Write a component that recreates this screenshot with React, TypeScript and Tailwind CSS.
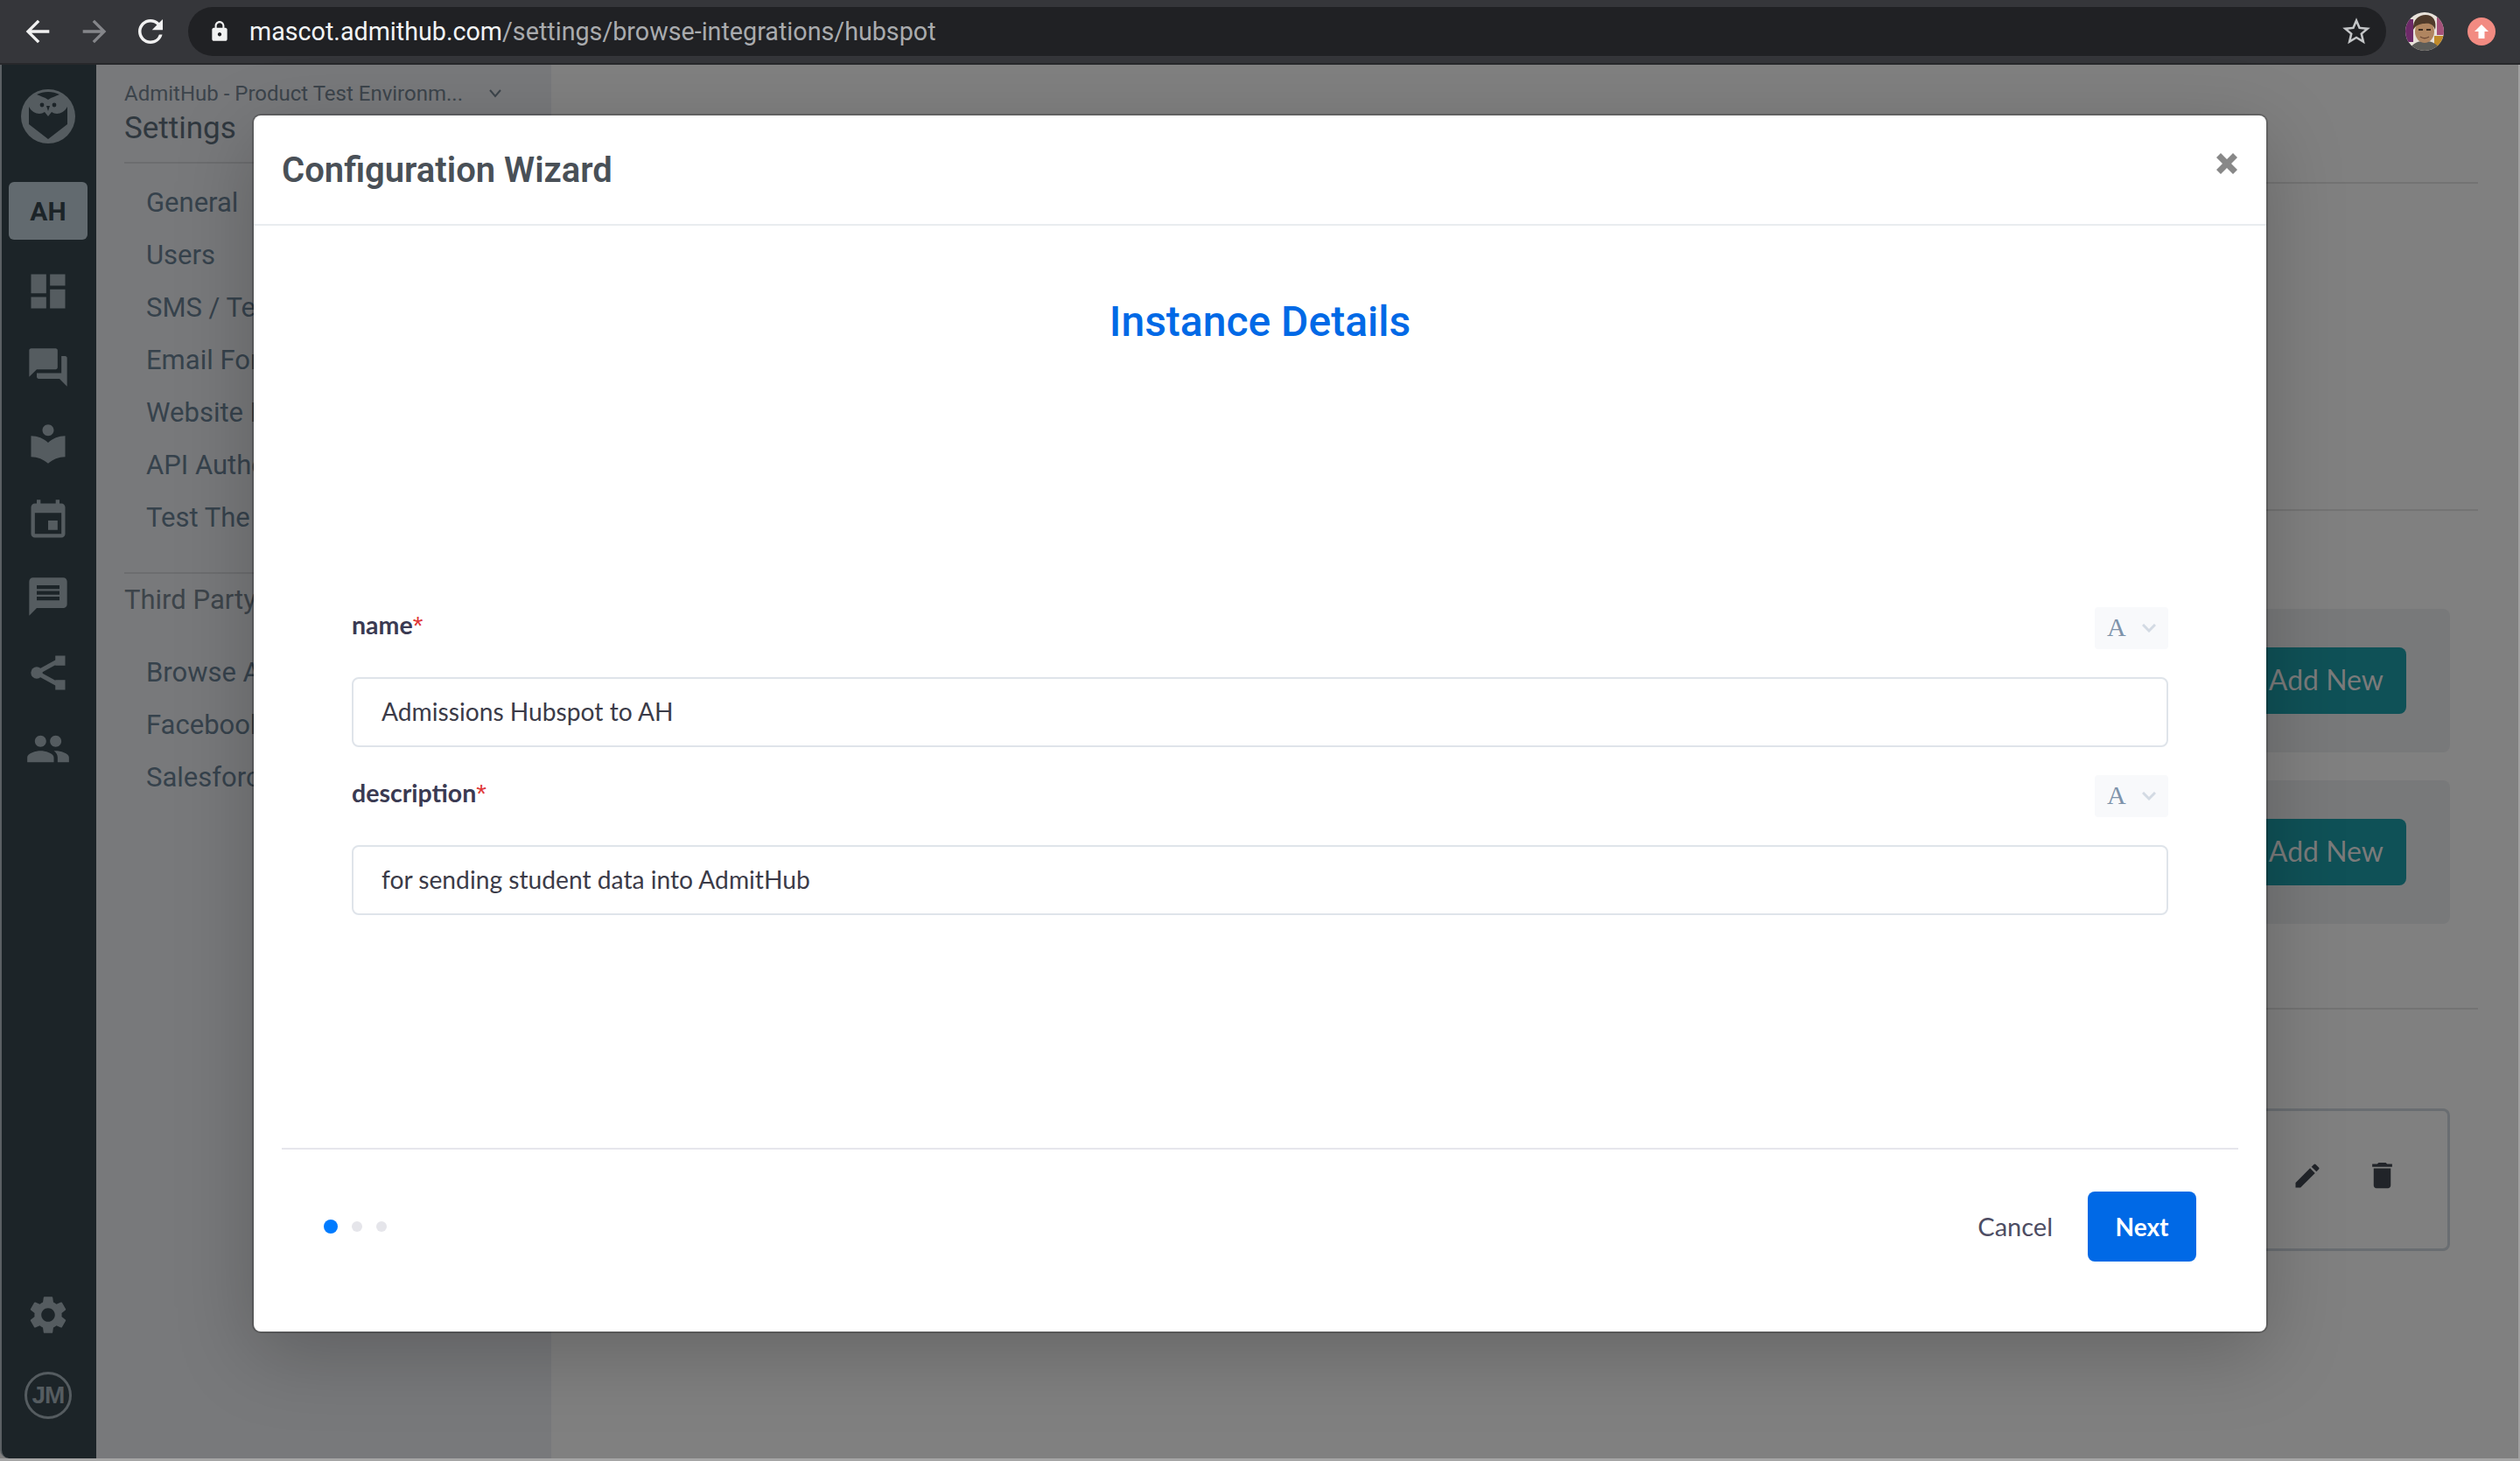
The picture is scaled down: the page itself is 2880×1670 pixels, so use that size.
import { MdArrowBack, MdArrowForward, MdRefresh, MdLock, MdStarBorder, MdDashboard, MdQuestionAnswer, MdLocalLibrary, MdEvent, MdMessage, MdPeople, MdSettings, MdEdit, MdDelete } from "react-icons/md";

const ShareNodes = ({ size }: { size: number }) => (
  <svg width={size} height={size} viewBox="0 0 24 24" fill="currentColor">
    <circle cx="6" cy="12" r="3.1" />
    <rect x="15.8" y="3" width="5.2" height="5.2" />
    <rect x="15.8" y="15.8" width="5.2" height="5.2" />
    <path d="M6 12 L18 5.4 M6 12 L18 18.6" stroke="currentColor" strokeWidth="2.3" fill="none" />
  </svg>
);

const railIcons = [
  { name: "dashboard", Icon: MdDashboard },
  { name: "chat", Icon: MdQuestionAnswer },
  { name: "knowledge", Icon: MdLocalLibrary },
  { name: "calendar", Icon: MdEvent },
  { name: "messages", Icon: MdMessage },
  { name: "share", Icon: ShareNodes },
  { name: "people", Icon: MdPeople },
];

const settingsLinks = ["General", "Users", "SMS / Text", "Email Forwarding", "Website Bot", "API Authentication", "Test The Bot"];
const thirdPartyLinks = ["Browse All", "Facebook", "Salesforce"];

const OwlLogo = () => (
  <svg width="62" height="62" viewBox="0 0 62 62">
    <circle cx="31" cy="31" r="31" fill="#555c60" />
    <path d="M18 6 C26 2 36 2 44 6 C40 8 35 9 31 12 C27 9 22 8 18 6 Z" fill="#1c2428" />
    <path d="M9 20 C13 28 22 30 27 26 L31 31 L35 26 C40 30 49 28 53 20 L53 40 L31 57 L9 40 Z" fill="#1c2428" />
    <circle cx="24" cy="18" r="2.4" fill="#1c2428" />
    <circle cx="38" cy="18" r="2.4" fill="#1c2428" />
    <path d="M29 19 L33 19 L31 25 Z" fill="#1c2428" />
  </svg>
);

const Avatar = () => (
  <svg width="44" height="44" viewBox="0 0 44 44">
    <defs>
      <clipPath id="avatar-clip">
        <circle cx="22" cy="22" r="22" />
      </clipPath>
    </defs>
    <g clipPath="url(#avatar-clip)">
      <rect width="44" height="44" fill="#e8e2da" />
      <rect x="0" y="8" width="9" height="26" fill="#6d2a68" />
      <rect x="36" y="6" width="8" height="20" fill="#a4527a" />
      <rect x="33" y="27" width="11" height="13" fill="#c08a2a" />
      <path d="M4 44 C8 34 16 33 22 33 C28 33 36 34 40 44 Z" fill="#5c5c58" />
      <ellipse cx="22" cy="22" rx="11" ry="13" fill="#b08560" />
      <path d="M9 20 C8 8 16 3 23 3 C32 3 36 10 34 20 C32 14 28 12 22 13 C16 13 12 15 9 20 Z" fill="#4f3a2a" />
      <rect x="15" y="19" width="5" height="2" fill="#3c2c20" />
      <rect x="24" y="19" width="5" height="2" fill="#3c2c20" />
      <path d="M17 28 C20 30 24 30 27 28" stroke="#6e4a36" strokeWidth="1.5" fill="none" />
    </g>
  </svg>
);

const BrowserBar = () => (
  <div className="flex h-[74px] shrink-0 items-center border-b-2 border-[#27282b] bg-[#35363a] pl-[23px]">
    <MdArrowBack size={40} className="text-[#f1f1f1]" />
    <MdArrowForward size={40} className="ml-[25px] text-[#85868a]" />
    <MdRefresh size={42} className="ml-[23px] text-[#f1f1f1]" />
    <div className="ml-[22px] flex h-[56px] w-[2512px] items-center rounded-full bg-[#202124] pl-[23px] pr-[15px]">
      <MdLock size={26} className="text-[#f1f1f1]" />
      <div className="ml-[21px] font-['Roboto',sans-serif] text-[28.7px] leading-none text-[#a9abae]">
        <span className="text-[#f1f3f4]">mascot.admithub.com</span>/settings/browse-integrations/hubspot
      </div>
      <MdStarBorder size={38} className="ml-auto text-[#c4c6c8]" />
    </div>
    <div className="ml-[22px]"><Avatar /></div>
    <div className="ml-[27px] flex h-[32px] w-[32px] items-center justify-center rounded-full bg-[#f28b82]">
      <svg width="18" height="18" viewBox="0 0 18 18" fill="#fff"><path d="M9 1 L17 9 L12.5 9 L12.5 17 L5.5 17 L5.5 9 L1 9 Z" /></svg>
    </div>
  </div>
);

const IconRail = () => (
  <div className="flex w-[110px] shrink-0 flex-col items-center rounded-bl-[10px] border-l-2 border-[#5b6064] bg-[#1c2428] pb-[45px] pr-[2px] pt-[28px] text-[#555c60]">
    <OwlLogo />
    <div className="mt-[44px] flex h-[66px] w-[90px] items-center justify-center rounded-[6px] bg-[#626a6f] font-['Roboto',sans-serif] text-[30px] font-bold text-[#1c2428]">
      AH
    </div>
    <div className="mt-[15px] flex flex-col items-center">
      {railIcons.map(({ name, Icon }) => (
        <div key={name} className="flex h-[87.3px] w-[90px] items-center justify-center">
          <Icon size={52} />
        </div>
      ))}
    </div>
    <div className="mt-auto">
      <MdSettings size={52} />
    </div>
    <div className="mt-[39px] flex h-[54px] w-[54px] items-center justify-center rounded-full border-[3px] border-[#555c60] font-['Liberation_Sans',sans-serif] text-[28px] font-bold tracking-[-1px]">
      JM
    </div>
  </div>
);

const SettingsNav = () => (
  <div className="flex w-[520px] shrink-0 flex-col bg-[#78797b] pl-[32px] font-['Roboto',sans-serif] text-[#36424c]">
    <div className="mt-[20px] flex h-[26px] w-[432px] items-center text-[24px] leading-none text-[#3c444b]">
      <span className="whitespace-nowrap">AdmitHub - Product Test Environm...</span>
      <svg width="16" height="10" viewBox="0 0 16 10" className="ml-auto" fill="none" stroke="#3c444b" strokeWidth="2"><path d="M2 1 L8 8 L14 1" /></svg>
    </div>
    <div className="mt-[3px] text-[35px] leading-[48px] text-[#30383f]">Settings</div>
    <div className="mr-[16px] mt-[14px] h-[2px] bg-[#6c6d6f]" />
    <div className="mt-[15px] flex flex-col pl-[25px]">
      {settingsLinks.map((link) => (
        <div key={link} className="flex h-[60px] items-center whitespace-nowrap text-[31px]">{link}</div>
      ))}
    </div>
    <div className="mr-[16px] mt-[32px] h-[2px] bg-[#6c6d6f]" />
    <div className="mt-[10px] flex h-[40px] items-center whitespace-nowrap text-[31px] text-[#3d444a]">Third Party Integrations</div>
    <div className="mt-[33px] flex flex-col pl-[25px]">
      {thirdPartyLinks.map((link) => (
        <div key={link} className="flex h-[60px] items-center whitespace-nowrap text-[31px]">{link}</div>
      ))}
    </div>
  </div>
);

const AddNewPanel = () => (
  <div className="flex h-[164px] items-center justify-end rounded-[8px] bg-[#78797a] pr-[50px]">
    <div className="flex h-[76px] w-[200px] items-center justify-end rounded-[8px] bg-[#0f5157] pb-[2px] pr-[26px] font-['Lato',sans-serif] text-[32px] text-[#7b7b7b]">
      Add New
    </div>
  </div>
);

const MainContent = () => (
  <div className="relative min-w-0 flex-1 bg-[#808080] pl-[90px] pr-[46px]">
    <div className="mt-[50px] flex h-[40px] items-center font-['Roboto',sans-serif] text-[32px] text-[#0f5157]">← Browse Third Party Integrations</div>
    <div className="mt-[44px] h-[2px] bg-[#737373]" />
    <div className="mt-[372px] h-[2px] bg-[#737373]" />
    <div className="mr-[32px] mt-[112px] flex flex-col gap-[32px]">
      <AddNewPanel />
      <AddNewPanel />
    </div>
    <div className="mt-[96px] h-[2px] bg-[#737373]" />
    <div className="mr-[32px] mt-[113px] flex h-[163px] items-start justify-end gap-[48px] rounded-[8px] border-[3px] border-[#696d71] pr-[55px] pt-[56px] text-[#212429]">
      <MdEdit size={36} />
      <MdDelete size={39} className="-mt-[2px]" />
    </div>
  </div>
);

const FieldHeader = ({ label }: { label: string }) => (
  <div className="flex h-[48px] items-start justify-between">
    <div className="font-['Lato',sans-serif] text-[28.5px] font-bold leading-[40px] text-[#3a3a52]">
      {label}<span className="font-['Liberation_Sans',sans-serif] text-[30px] font-normal text-[#e03a3a]">*</span>
    </div>
    <div className="flex h-[48px] w-[84px] items-center rounded-[4px] bg-[#f8f9fb] pl-[14px]">
      <span className="-mt-[2px] font-['Liberation_Serif',serif] text-[30px] leading-none text-[#7e93aa]">A</span>
      <svg width="16" height="10" viewBox="0 0 16 10" className="ml-[18px]" fill="none" stroke="#d3dae3" strokeWidth="3"><path d="M1 1 L8 8 L15 1" /></svg>
    </div>
  </div>
);

const Field = ({ label, value }: { label: string; value: string }) => (
  <div className="flex flex-col gap-[32px]">
    <FieldHeader label={label} />
    <div className="flex h-[80px] items-center rounded-[8px] border-2 border-[#dfe4ea] bg-white pb-[2px] pl-[32px] font-['Lato',sans-serif] text-[28.2px] text-[#3b3b48]">
      {value}
    </div>
  </div>
);

const ConfigModal = () => (
  <div className="absolute left-[290px] top-[132px] flex h-[1390px] w-[2300px] flex-col rounded-[8px] bg-white shadow-[0_0_0_2px_rgba(0,0,0,0.2),0_24px_90px_rgba(0,0,0,0.22)]">
    <div className="flex h-[126px] shrink-0 items-center justify-between border-b-2 border-[#e9ecef] pl-[32px] pr-[33px]">
      <div className="pt-[2px] font-['Roboto',sans-serif] text-[40px] font-semibold text-[#495057]">Configuration Wizard</div>
      <svg width="24" height="24" viewBox="0 0 24 24" className="-mt-[14px]" fill="#888888"><path d="M5 0 L12 7 L19 0 L24 5 L17 12 L24 19 L19 24 L12 17 L5 24 L0 19 L7 12 L0 5 Z" /></svg>
    </div>
    <div className="mt-[80px] text-center font-['Roboto',sans-serif] text-[48px] font-medium leading-[60px] text-[#0069e6]">Instance Details</div>
    <div className="mt-[296px] flex flex-col gap-[32px] px-[112px]">
      <Field label="name" value="Admissions Hubspot to AH" />
      <Field label="description" value="for sending student data into AdmitHub" />
    </div>
    <div className="mx-[32px] mt-auto h-[2px] bg-[#e6e6ec]" />
    <div className="flex items-center justify-between pb-[80px] pl-[80px] pr-[80px] pt-[48px]">
      <div className="flex items-center gap-[16px]">
        <div className="h-[16px] w-[16px] rounded-full bg-[#007bff]" />
        <div className="h-[12px] w-[12px] rounded-full bg-[#e5e5ea]" />
        <div className="h-[12px] w-[12px] rounded-full bg-[#e5e5ea]" />
      </div>
      <div className="flex items-center gap-[40px] font-['Lato',sans-serif] text-[29px]">
        <span className="text-[#4d4d63]">Cancel</span>
        <span className="flex h-[80px] w-[124px] items-center justify-center rounded-[8px] bg-[#0069e6] text-[28px] font-bold text-white">Next</span>
      </div>
    </div>
  </div>
);

export default function App() {
  return (
    <div className="relative flex h-[1670px] w-[2880px] flex-col overflow-hidden bg-[#808080]">
      <BrowserBar />
      <div className="flex min-h-0 flex-1 border-r-2 border-[#a0a0a0]">
        <IconRail />
        <SettingsNav />
        <MainContent />
      </div>
      <div className="h-[3px] shrink-0 bg-[#a5a5a5]" />
      <ConfigModal />
    </div>
  );
}
